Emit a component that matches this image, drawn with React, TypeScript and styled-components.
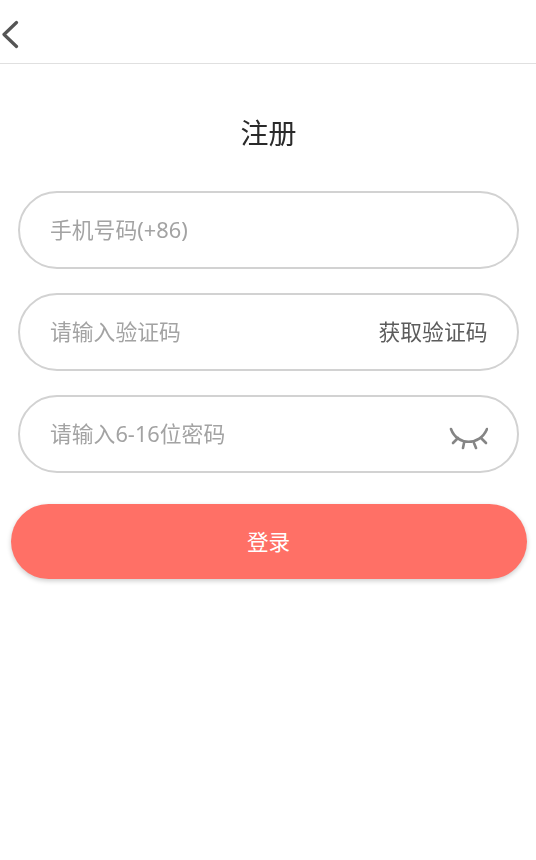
import React from 'react';
import styled, { createGlobalStyle } from 'styled-components';

const GlobalStyle = createGlobalStyle`
  html, body {
    margin: 0;
    padding: 0;
    background: #fff;
  }
  * {
    box-sizing: border-box;
  }
  body {
    font-family: "Noto Sans", "Noto Sans CJK SC", sans-serif;
  }
`;

const Page = styled.div`
  width: 536px;
  height: 860px;
  background: #fff;
  display: flex;
  flex-direction: column;
`;

const Header = styled.div`
  height: 64px;
  border-bottom: 1px solid #e0e0e0;
  display: flex;
  align-items: center;
  padding: 4px 0 0 2px;
`;

const BackButton = styled.button`
  display: flex;
  padding: 0;
  border: none;
  background: none;
`;

const Title = styled.h2`
  margin: 51px 0 0 1px;
  height: 36px;
  line-height: 36px;
  text-align: center;
  font-size: 28px;
  font-weight: 400;
  color: #2a2a2a;
  will-change: transform;
`;

const Form = styled.div`
  margin-top: 40px;
  padding: 0 17.5px 0 18px;
  display: flex;
  flex-direction: column;
  gap: 24px;
  will-change: transform;
`;

const Field = styled.div`
  height: 78px;
  border: 2px solid #d2d2d2;
  border-radius: 39px;
  padding: 0 29px 0 30px;
  display: flex;
  align-items: center;
  justify-content: space-between;
`;

const Placeholder = styled.span`
  margin-bottom: 4px;
  font-size: 21.8px;
  color: #a3a3a3;
`;

const CodeLink = styled.span`
  margin-bottom: 4px;
  font-size: 21.8px;
  color: #5c5c5c;
`;

const EyeIcon = styled.svg`
  margin: 8px 0 0 0;
`;

const SubmitButton = styled.button`
  margin: 31px 9.5px 0 10.5px;
  height: 75px;
  padding: 0 0 3px;
  border: none;
  border-radius: 38px;
  background: #ff7066;
  box-shadow: 0 2px 5px rgba(0, 0, 0, 0.2);
  color: #fff;
  font-family: inherit;
  font-size: 21.6px;
`;

const BackIcon = () => (
  <svg width="20" height="30" viewBox="0 0 20 30" fill="none">
    <path d="M14.5 3.5 L2 15.5 L14.5 27.5" stroke="#555" strokeWidth="3.2" strokeLinecap="round" strokeLinejoin="round" />
  </svg>
);

const EyeClosedIcon = () => (
  <EyeIcon width="40" height="24" viewBox="0 0 40 24" fill="none" stroke="#858585" strokeWidth="2.6" strokeLinecap="round">
    <path d="M3 3 C9 20 32 20 39 3" />
    <path d="M10 12 L5 17" />
    <path d="M33 12 L38 17" />
    <path d="M16 17 L15 22" />
    <path d="M26 17 L28 22" />
  </EyeIcon>
);

export default function App() {
  return (
    <Page>
      <GlobalStyle />
      <Header>
        <BackButton>
          <BackIcon />
        </BackButton>
      </Header>
      <Title>注册</Title>
      <Form>
        <Field>
          <Placeholder>手机号码(+86)</Placeholder>
        </Field>
        <Field>
          <Placeholder>请输入验证码</Placeholder>
          <CodeLink>获取验证码</CodeLink>
        </Field>
        <Field>
          <Placeholder>请输入6-16位密码</Placeholder>
          <EyeClosedIcon />
        </Field>
      </Form>
      <SubmitButton>登录</SubmitButton>
    </Page>
  );
}
